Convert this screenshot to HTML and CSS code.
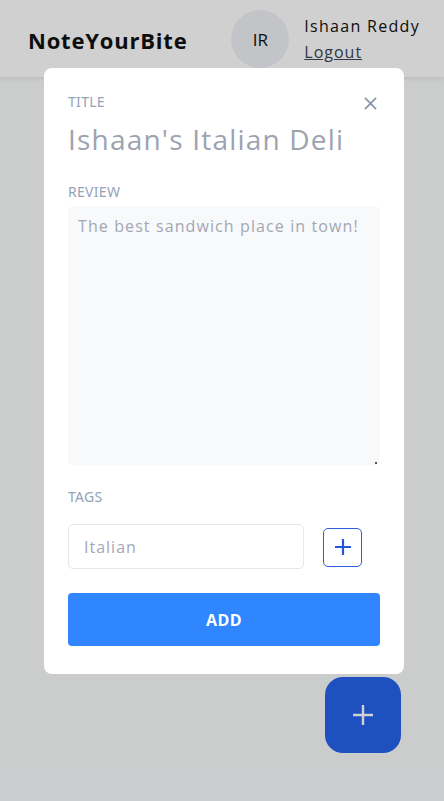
FILE: index.html
```html
<!DOCTYPE html>
<html>
<head>
<meta charset="utf-8">
<link rel="stylesheet" href="styles.css">
</head>
<body>
<header class="topbar">
  <div class="brand">NoteYourBite</div>
  <div class="user">
    <div class="avatar">IR</div>
    <div class="user-info">
      <div class="user-name">Ishaan Reddy</div>
      <a class="logout" href="#">Logout</a>
    </div>
  </div>
</header>
<main class="content"></main>
<button class="fab" aria-label="Add">
  <svg width="24" height="24" viewBox="0 0 24 24"><path d="M12 2v20M2 12h20" stroke="#fff" stroke-width="2.4" fill="none"/></svg>
</button>
<div class="overlay"></div>
<div class="modal">
  <div class="field-head">
    <span class="label">TITLE</span>
    <button class="close" aria-label="Close">
      <svg width="14" height="14" viewBox="0 0 14 14"><path d="M1 1l12 12M13 1L1 13" stroke="#8a95a8" stroke-width="1.8" fill="none"/></svg>
    </button>
  </div>
  <div class="title-input">Ishaan's Italian Deli</div>
  <div class="label review-label">REVIEW</div>
  <div class="textarea">The best sandwich place in town!<span class="grip"></span></div>
  <div class="label tags-label">TAGS</div>
  <div class="tag-row">
    <div class="tag-input">Italian</div>
    <button class="tag-add" aria-label="Add tag">
      <svg width="20" height="20" viewBox="0 0 20 20"><path d="M10 2v16M2 10h16" stroke="#2456d6" stroke-width="2.2" fill="none"/></svg>
    </button>
  </div>
  <button class="add-btn">ADD</button>
</div>
</body>
</html>
```
FILE: styles.css
```css
* { box-sizing: border-box; }
html, body { margin: 0; padding: 0; }
body {
  width: 444px;
  height: 801px;
  background: #f9fafb;
  font-family: "Open Sans", "Noto Sans", sans-serif;
  overflow: hidden;
  position: relative;
}
.topbar {
  height: 77px;
  background: #ffffff;
  box-shadow: 0 2px 4px rgba(0,0,0,0.08);
  display: flex;
  align-items: center;
  justify-content: space-between;
  padding: 0 24px 0 28px;
}
.brand {
  font-size: 22px;
  font-weight: 700;
  color: #111;
  letter-spacing: 0.8px;
  margin-top: 2px;
}
.user {
  display: flex;
  align-items: center;
  gap: 15px;
}
.avatar {
  width: 58px;
  height: 58px;
  border-radius: 50%;
  background: #eef1f6;
  display: flex;
  align-items: center;
  justify-content: center;
  font-size: 17px;
  color: #111;
  margin-top: 1px;
}
.user-info {
  display: flex;
  flex-direction: column;
  gap: 4px;
  margin-top: 1px;
}
.user-name {
  font-size: 16px;
  color: #111;
  letter-spacing: 1.3px;
}
.logout {
  font-size: 16px;
  color: #3a4456;
  text-decoration: underline;
  letter-spacing: 1px;
}
.content { height: 724px; }
.fab {
  position: absolute;
  left: 325px;
  top: 677px;
  width: 76px;
  height: 76px;
  border: none;
  border-radius: 18px;
  background: #2563eb;
  display: flex;
  align-items: center;
  justify-content: center;
  padding: 0;
}
.overlay {
  position: absolute;
  inset: 0;
  background: rgba(0,0,0,0.185);
}
.modal {
  position: absolute;
  left: 44px;
  top: 68px;
  width: 360px;
  background: #fff;
  border-radius: 8px;
  padding: 26px 24px 28px 24px;
  display: flex;
  flex-direction: column;
}
.field-head {
  display: flex;
  justify-content: space-between;
  align-items: center;
  height: 16px;
}
.label {
  font-family: "Noto Sans", "Open Sans", sans-serif;
  font-size: 14px;
  line-height: 16px;
  color: #94a3b8;
  letter-spacing: 0.3px;
}
.close {
  background: none;
  border: none;
  padding: 0;
  margin-right: 3px;
  margin-top: 3px;
  display: flex;
}
.close svg { width: 13px; height: 13px; }
.title-input {
  margin-top: 10px;
  font-size: 28px;
  color: #9ca3af;
  height: 40px;
  line-height: 38px;
  letter-spacing: 1.2px;
}
.review-label { margin-top: 24px; }
.textarea {
  margin-top: 6px;
  height: 259px;
  background: #f8f9fb;
  border-radius: 5px;
  padding: 9px 10px;
  font-size: 16px;
  color: #a3a7b3;
  letter-spacing: 1.1px;
  position: relative;
}
.grip {
  position: absolute;
  right: 3px;
  bottom: 1px;
  width: 2px;
  height: 2px;
  background: #555;
}
.tags-label { margin-top: 24px; }
.tag-row {
  margin-top: 19px;
  display: flex;
  align-items: center;
  gap: 19px;
}
.tag-input {
  width: 236px;
  height: 45px;
  border: 1px solid #e5e7eb;
  border-radius: 5px;
  padding: 0 15px;
  display: flex;
  align-items: center;
  font-size: 16px;
  color: #a3a7b3;
  letter-spacing: 1px;
}
.tag-add {
  width: 39px;
  height: 39px;
  border: 1.5px solid #2d5ee0;
  border-radius: 5px;
  background: #fff;
  display: flex;
  align-items: center;
  justify-content: center;
  padding: 0;
  margin-top: 1px;
}
.add-btn {
  margin-top: 24px;
  height: 53px;
  border: none;
  border-radius: 4px;
  background: #2f86ff;
  color: #fff;
  font-family: "Open Sans", sans-serif;
  font-weight: 700;
  font-size: 16px;
  letter-spacing: 0.5px;
}
```
